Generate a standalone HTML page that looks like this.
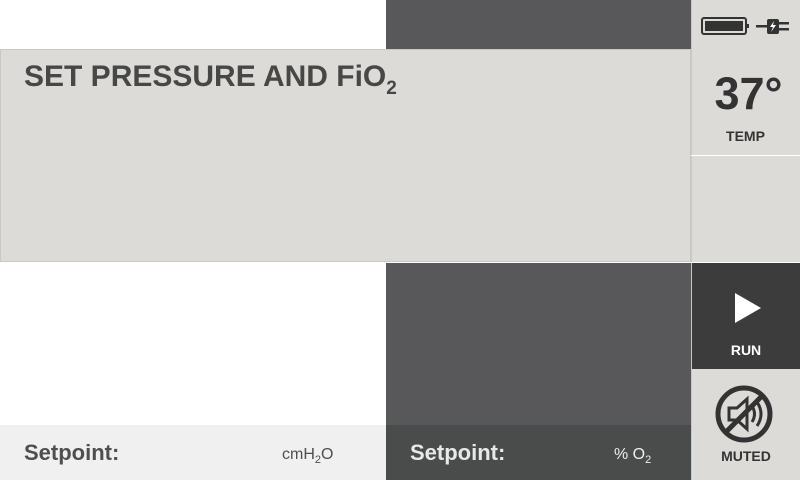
<!DOCTYPE html>
<html><head><style>
*{margin:0;padding:0;box-sizing:border-box}
body{width:800px;height:480px;position:relative;overflow:hidden;background:#fff;font-family:"Liberation Sans",sans-serif}
div{position:absolute}
.t{font-weight:bold;color:#4a4a4a}
</style></head><body>
<div style="left:386px;top:0;width:305px;height:49px;background:#58585a"></div>
<div style="left:0;top:49px;width:691px;height:213px;background:#dcdbd8;border:1px solid #c8c8c6"></div>
<div class="t" style="left:24px;top:60px;font-size:30px;letter-spacing:0px;color:#474747">SET PRESSURE AND FiO<sub style="font-size:19px;vertical-align:-8px">2</sub></div>
<div style="left:386px;top:263px;width:305px;height:162px;background:#58585a"></div>
<div style="left:0;top:425px;width:386px;height:55px;background:#f0f0f0"></div>
<div style="left:386px;top:425px;width:305px;height:55px;background:#4a4b4b"></div>
<div class="t" style="left:24px;top:440px;font-size:22px;color:#4f4f4f">Setpoint:</div>
<div style="left:282px;top:446px;font-size:16px;color:#4f4f4f">cmH<sub style="font-size:11px">2</sub>O</div>
<div class="t" style="left:410px;top:440px;font-size:22px;color:#e8e8e8">Setpoint:</div>
<div style="left:614px;top:446px;font-size:16px;color:#eee">% O<sub style="font-size:11px">2</sub></div>
<div style="left:691px;top:0;width:109px;height:480px;background:#dcdbd8;border-left:1px solid #c8c8c6"></div>
<div style="left:691px;top:155px;width:109px;height:1px;background:#fff"></div>
<div style="left:691px;top:262px;width:109px;height:1px;background:#fff"></div>
<svg style="position:absolute;left:700px;top:16px" width="95" height="22" viewBox="0 0 95 22">
<rect x="2" y="2" width="44" height="16" rx="2" fill="none" stroke="#333" stroke-width="2"/>
<rect x="5" y="5" width="38" height="10" fill="#333"/>
<rect x="47" y="8" width="2" height="4" fill="#333"/>
<rect x="56" y="9" width="12" height="2.5" fill="#333"/>
<rect x="67" y="3" width="12" height="15" rx="2" fill="#333"/>
<rect x="79" y="6" width="10" height="2.5" fill="#333"/><rect x="79" y="12" width="10" height="2.5" fill="#333"/>
<path d="M74 5 L70 11 L73 11 L71 16 L76 9 L73 9 Z" fill="#fff"/>
</svg>
<div class="t" style="left:694px;width:109px;top:68px;text-align:center;font-size:45px;color:#333">37°</div>
<div class="t" style="left:691px;width:109px;top:128px;text-align:center;font-size:14px;color:#333">TEMP</div>
<div style="left:692px;top:263px;width:108px;height:106px;background:#3c3c3c"></div>
<svg style="position:absolute;left:735px;top:293px" width="26" height="30"><path d="M0 0 L26 15 L0 30Z" fill="#fff"/></svg>
<div class="t" style="left:692px;width:108px;top:342px;text-align:center;font-size:14px;color:#fff">RUN</div>
<svg style="position:absolute;left:714px;top:384px" width="60" height="60" viewBox="0 0 60 60">
<circle cx="30" cy="30" r="26" fill="none" stroke="#333" stroke-width="5"/>
<path d="M12 48 L48 12" stroke="#333" stroke-width="5"/>
<path d="M15 24 h8 l10 -9 v30 l-10 -9 h-8z" fill="none" stroke="#333" stroke-width="3"/>
<path d="M38 22 q5 8 0 16 M43 18 q8 12 0 24" fill="none" stroke="#333" stroke-width="3"/>
</svg>
<div class="t" style="left:692px;width:108px;top:448px;text-align:center;font-size:14px;color:#333">MUTED</div>
</body></html>
